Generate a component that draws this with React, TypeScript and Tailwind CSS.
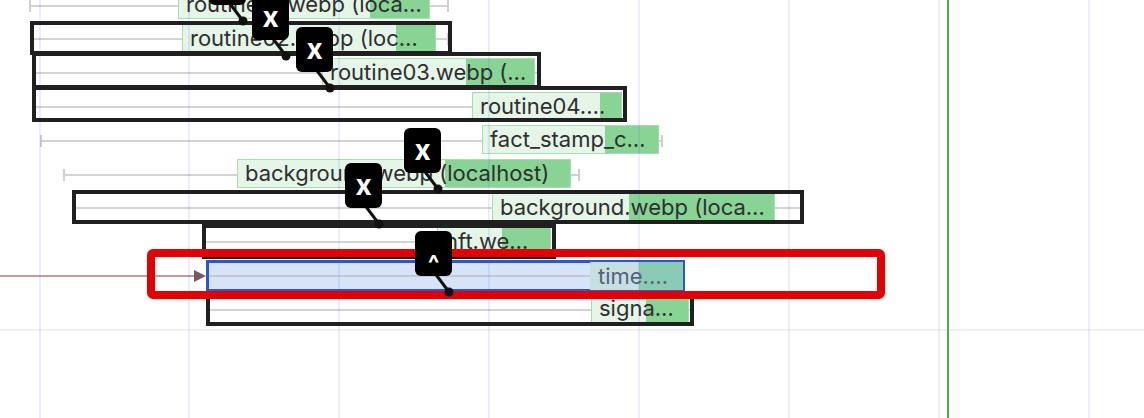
import React from "react";

type Row = {
  wl: number;
  wr: number;
  capL?: boolean;
  capR?: boolean;
  gl: number;
  gs: number;
  gr: number;
  label: string;
  selected?: boolean;
};

const rows: Row[] = [
  { wl: 29, wr: 449, capL: true, capR: true, gl: 178, gs: 370, gr: 430, label: "routine01.webp (loca…" },
  { wl: 33, wr: 449, capR: true, gl: 182, gs: 396, gr: 436, label: "routine02.webp (loc…" },
  { wl: 33, wr: 540, capR: true, gl: 322, gs: 466, gr: 535, label: "routine03.webp (…" },
  { wl: 33, wr: 622, gl: 472, gs: 600, gr: 622, label: "routine04.…" },
  { wl: 40, wr: 663, capL: true, capR: true, gl: 482, gs: 605, gr: 659, label: "fact_stamp_c…" },
  { wl: 63, wr: 580, capL: true, capR: true, gl: 237, gs: 445, gr: 571, label: "background.webp (localhost)" },
  { wl: 75, wr: 803, capR: true, gl: 492, gs: 629, gr: 775, label: "background.webp (loca…" },
  { wl: 205, wr: 551, gl: 437, gs: 502, gr: 551, label: "nft.we…" },
  { wl: 209, wr: 683, gl: 590, gs: 640, gr: 683, label: "time.…", selected: true },
  { wl: 210, wr: 690, gl: 591, gs: 646, gr: 689, label: "signa…" },
];

// outlined entries (outer box)
const outlines = [
  { l: 30, t: 21, r: 452, b: 55 },
  { l: 32, t: 52, r: 541, b: 89 },
  { l: 32, t: 86, r: 627, b: 122 },
  { l: 72, t: 190, r: 804, b: 224 },
  { l: 202, t: 224, r: 556, b: 259 },
  { l: 206, t: 291, r: 694, b: 326 },
];

const badges = [
  { l: 209, t: -40, text: "x" },
  { l: 252, t: -5, text: "x" },
  { l: 296, t: 27, text: "x" },
  { l: 404, t: 128, text: "x" },
  { l: 345, t: 163, text: "x" },
  { l: 415, t: 231, text: "^" },
];

const gridX = [40, 189, 339, 489, 639, 789, 939, 1089];

const BADGE_W = 37;
const BADGE_H = 45;

function WaterfallRow({ row }: { row: Row }) {
  const sel = row.selected;
  return (
    <div className="relative h-[33.8px] shrink-0">
      {sel && (
        <>
          <div className="absolute left-0 top-[16px] h-[2px] w-[196px] bg-[#bc9ea1]" />
          <svg className="absolute left-[194px] top-[11px]" width="12" height="12" viewBox="0 0 12 12">
            <polygon points="0,0 12,6 0,12" fill="#7d585b" />
          </svg>
          <div className="absolute left-[206px] top-[1px] h-[32px] w-[479px] border-[3px] border-[#2a57d0] bg-[#d6e3f9]" />
        </>
      )}
      <div
        className={sel ? "absolute top-[16px] h-[2px] bg-[#c3c8d2]" : "absolute top-[16px] h-[2px] bg-[#d3d3d3]"}
        style={{ left: row.wl, width: row.wr - row.wl }}
      />
      {row.capL && <div className="absolute top-[11px] h-[12px] w-[2px] bg-[#cfcfcf]" style={{ left: row.wl }} />}
      {row.capR && <div className="absolute top-[11px] h-[12px] w-[2px] bg-[#cfcfcf]" style={{ left: row.wr - 2 }} />}
      <div
        className={
          sel
            ? "absolute top-[3px] h-[28px] overflow-hidden bg-[#c6e0e2]"
            : "absolute top-[1.5px] h-[29px] overflow-hidden border border-[#a9dcb0] bg-[#e5f5e7]"
        }
        style={{ left: row.gl, width: row.gr - row.gl }}
      >
        <div
          className={sel ? "absolute inset-y-0 right-0 bg-[#8bcab4]" : "absolute inset-y-0 right-0 bg-[#87d494]"}
          style={{ left: row.gs - row.gl - 1 }}
        />
        <span
          className={
            sel
              ? "relative block whitespace-nowrap pl-[8px] text-[22px] leading-[28px] text-[#56617a]"
              : "relative block whitespace-nowrap pl-[7px] text-[22px] leading-[27px] text-[#2f2f2f]"
          }
        >
          {row.label}
        </span>
      </div>
    </div>
  );
}

export default function App() {
  return (
    <div className="relative h-[418px] w-[1144px] overflow-hidden bg-white font-['Inter','Liberation_Sans',sans-serif]">
      {/* rows */}
      <div className="mt-[-11.4px] flex flex-col">
        {rows.map((r, i) => (
          <WaterfallRow key={i} row={r} />
        ))}
      </div>

      {/* bottom divider */}
      <div className="absolute left-0 right-0 top-[329px] h-[2px] bg-[#efefef]" />

      {/* grid */}
      {gridX.map((x) => (
        <div key={x} className="absolute top-0 bottom-0 w-[2px] bg-[#3355dd]/10" style={{ left: x - 1 }} />
      ))}

      {/* outlined entries */}
      {outlines.map((o, i) => (
        <div
          key={i}
          className="absolute border-4 border-[#202020]"
          style={{ left: o.l, top: o.t, width: o.r - o.l, height: o.b - o.t }}
        />
      ))}

      {/* selection highlight */}
      <div className="absolute left-[147px] top-[249px] h-[50px] w-[738px] rounded-[6px] border-[8px] border-[#e20000]" />

      {/* connectors */}
      <svg className="absolute left-0 top-0" width="1144" height="418">
        {badges.map((b, i) => {
          const bottom = b.t + BADGE_H;
          const dx = b.l + 34;
          const dy = bottom + 16;
          return (
            <g key={i}>
              <line x1={b.l + 19} y1={bottom - 4} x2={dx} y2={dy} stroke="#111" strokeWidth="3" />
              <circle cx={dx} cy={dy} r="4.5" fill="#111" />
            </g>
          );
        })}
      </svg>

      {/* badges */}
      {badges.map((b, i) => (
        <div
          key={i}
          className="absolute flex items-center justify-center rounded-[6px] bg-black text-white"
          style={{ left: b.l, top: b.t, width: BADGE_W, height: BADGE_H }}
        >
          <span
            className={
              b.text === "^"
                ? "translate-y-[10px] text-[24px] font-bold leading-none"
                : "-translate-y-[1px] text-[28px] font-bold leading-none"
            }
          >
            {b.text}
          </span>
        </div>
      ))}

      {/* current time marker */}
      <div className="absolute top-0 bottom-0 left-[947px] w-[2px] bg-[#4caf50]" />
    </div>
  );
}
